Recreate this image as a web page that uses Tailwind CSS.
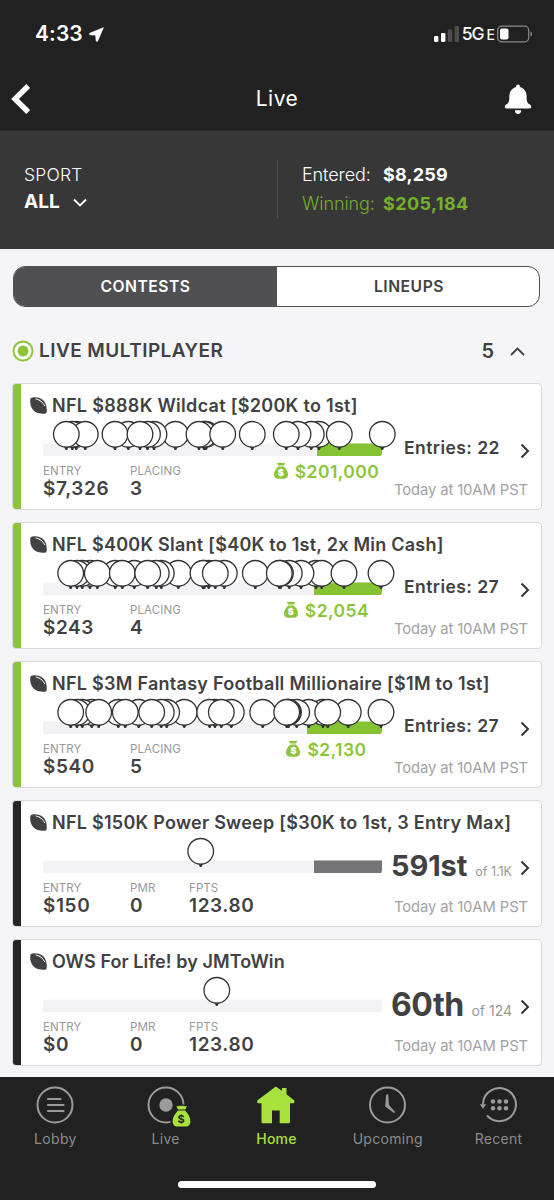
<!DOCTYPE html>
<html lang="en">
<head>
<meta charset="utf-8">
<title>Live</title>
<script src="https://cdn.jsdelivr.net/npm/@tailwindcss/browser@4"></script>
</head>
<body class="w-[554px] h-[1200px] overflow-hidden bg-[#f5f5f8] font-['Inter',sans-serif] text-[#414143] flex flex-col">
<svg class="hidden">
  <defs>
    <symbol id="ball" viewBox="0 0 18 18"><path d="M.3 2.800C.5 1.200 1.200.5 2.800.4C7-.1 11.500.9 14.300 3.800C17.300 7 18 11.500 17.700 15.500C17.500 17 17 17.500 15.500 17.700C11.200 18 6.600 17.200 3.600 14C.6 11 0 6.800.3 2.800Z" fill="#414143"/><path d="M6 2C10 2.700 14.200 5.600 15.700 9.600" fill="none" stroke="#fff" stroke-width="1"/><path d="M9.600 4.200l.7-1.500M11.600 5.500l1-1.300" stroke="#fff" stroke-width=".8"/></symbol>
    <symbol id="bag" viewBox="0 0 14 17"><path d="M2.800.6C4 1.600 5 .4 7 .7C9 .4 10 1.600 11.400.6L10 3.500H4.200Z"/><path d="M4.300 4.600H9.800C12.200 6.800 14 9.500 14 12.500C14 15.500 12.200 16.700 9.500 16.700H4.500C1.800 16.700 0 15.500 0 12.500C0 9.500 1.900 6.800 4.300 4.600Z"/></symbol>
    <g id="pin"><path d="M-2.400 12L-.8 15.800H.8L2.400 12Z" fill="#333335"/><circle r="12.800" fill="#fff" stroke="#333335" stroke-width="1.300"/></g>
    <symbol id="chev" viewBox="0 0 10 16"><path d="M1.500 1.500L8 8L1.500 14.500" fill="none" stroke="#333" stroke-width="2"/></symbol>
  </defs>
</svg>

<header class="h-[131px] shrink-0 bg-[#212121] text-white border-b border-[#2b2b2b]">
  <div class="h-[68px] pl-[35px] pr-[21px] flex items-center justify-between">
    <div class="flex items-center gap-[6px]">
      <span class="text-[21px] font-semibold tracking-[0.1px]">4:33</span>
      <svg class="w-[15px] h-[15px]" viewBox="0 0 15 15"><path d="M14.600.4L8.800 14C8.400 14.800 7.200 14.800 7 13.800L6.500 8.300L1 7.900C0 7.700-.1 6.600.9 6.100Z" fill="#fff" stroke="#fff" stroke-width=".4"/></svg>
    </div>
    <div class="flex items-center gap-[3px]">
      <svg class="w-[26px] h-[16px]" viewBox="0 0 26 16"><rect x="1" y="10" width="4.400" height="6" rx="1.200" fill="#fff"/><rect x="8" y="7" width="4.400" height="9" rx="1.200" fill="#fff"/><rect x="14.800" y="3.500" width="4.400" height="12.500" rx="1.200" fill="#4d4d4d"/><rect x="21.600" y="0" width="4.400" height="16" rx="1.200" fill="#4d4d4d"/></svg>
      <span class="text-[17.500px] font-medium tracking-[-1px] pt-px">5G<span class="text-[14px] ml-[3px]">E</span></span>
      <svg class="w-[36px] h-[18px]" viewBox="0 0 36 18"><rect x=".7" y="1.200" width="31" height="15.600" rx="4" fill="none" stroke="#8a8a8a" stroke-width="1.200"/><rect x="3" y="3.500" width="8.500" height="11" rx="2" fill="#fff"/><path d="M33.500 6.500C35.600 7.500 35.600 10.500 33.500 11.500Z" fill="#8a8a8a"/></svg>
    </div>
  </div>
  <div class="h-[62px] pl-[11px] pr-[22px] grid grid-cols-3 items-center">
    <svg class="w-[20px] h-[30px]" viewBox="0 0 20 30"><path d="M17.200 2L4 15L17.200 28" fill="none" stroke="#fff" stroke-width="5.400"/></svg>
    <span class="text-[21px] text-center pl-[11px] tracking-[0.5px]">Live</span>
    <svg class="w-[28px] h-[31px] justify-self-end" viewBox="0 0 28 31"><path d="M14 .5C15.500.5 15.900 1.500 15.900 3C20 4.200 22.600 7.500 22.600 12C22.600 18 23.500 19.200 25.800 20.600C28 22 27.500 24.500 25.500 24.500H2.500C.5 24.500 0 22 2.200 20.600C4.500 19.200 5.400 18 5.400 12C5.400 7.500 8 4.200 12.100 3C12.100 1.500 12.500.5 14 .5Z" fill="#fff"/><path d="M10.800 26.300H17.200C17.200 31.300 10.800 31.300 10.800 26.300Z" fill="#fff"/></svg>
  </div>
</header>

<section class="h-[118px] shrink-0 bg-[#373737] text-white flex">
  <div class="w-[277px] pl-[24px] pt-[31px]">
    <div class="h-[26px] flex items-center text-[17.500px] font-light tracking-[0.2px]">SPORT</div>
    <div class="h-[28px] flex items-center gap-[13px] text-[19px] font-bold">ALL
      <svg class="w-[14px] h-[9px]" viewBox="0 0 14 9"><path d="M1 1.500L7 7.500L13 1.500" fill="none" stroke="#fff" stroke-width="1.800"/></svg>
    </div>
  </div>
  <div class="w-px h-[58px] mt-[29px] bg-[#505050]"></div>
  <div class="pl-[24px] pt-[29px] text-[18px]">
    <div class="h-[29px] flex items-center"><span class="w-[81px] font-light tracking-[-0.1px]">Entered:</span><span class="font-bold tracking-[0.2px]">$8,259</span></div>
    <div class="h-[29px] flex items-center text-[#76ae2d]"><span class="w-[81px] font-light tracking-[-0.1px]">Winning:</span><span class="font-bold tracking-[0.4px]">$205,184</span></div>
  </div>
</section>

<main class="flex-1 pl-[12px] pr-[12px] pt-[17px]">
  <div class="ml-px h-[41px] w-[527px] rounded-[12px] border border-[#505052] bg-white overflow-hidden flex text-[15.700px] font-semibold tracking-[0.5px]">
    <div class="w-[263px] bg-[#505052] text-white flex items-center justify-center pt-px">CONTESTS</div>
    <div class="flex-1 flex items-center justify-center pt-px pl-[2px]">LINEUPS</div>
  </div>
  <div class="h-[76px] pt-[12px] flex items-center">
    <svg class="w-[22px] h-[22px]" viewBox="0 0 22 22"><circle cx="11" cy="11" r="9.500" fill="#fff" stroke="#8bc53a" stroke-width="1.900"/><circle cx="11" cy="11" r="5.500" fill="#8bc53a"/></svg>
    <span class="ml-[5px] pt-px text-[19px] font-semibold tracking-[0.450px]">LIVE MULTIPLAYER</span>
    <span class="ml-auto text-[20px] font-semibold">5</span>
    <svg class="w-[15px] h-[9px] ml-[16px] mr-[17px] mt-px" viewBox="0 0 15 9"><path d="M1 8L7.500 1.500L14 8" fill="none" stroke="#414143" stroke-width="1.800"/></svg>
  </div>

  <div id="contests" class="flex flex-col gap-[12px]"></div>
</main>

<nav class="h-[123px] shrink-0 bg-[#212121] text-[#8c8c8c] text-[14px] tracking-[0.3px] flex flex-col items-center">
  <div class="w-full h-[104px] pt-[9px] grid grid-cols-5">
    <div class="flex flex-col items-center"><svg class="w-[48px] h-[42px]" viewBox="0 0 48 42"><circle cx="24" cy="19" r="17.500" fill="none" stroke="#9b9b9b" stroke-width="2"/><path d="M17 13H29.500M17 19H32.500M17 25H32.500" stroke="#9b9b9b" stroke-width="2.200" stroke-linecap="round"/></svg><span class="leading-[22px]">Lobby</span></div>
    <div class="flex flex-col items-center pr-[1px]"><span class="relative w-[48px] h-[42px]"><svg class="w-[48px] h-[42px]" viewBox="0 0 48 42"><circle cx="24" cy="19" r="17.500" fill="none" stroke="#9b9b9b" stroke-width="2"/><path d="M28.500 18.500H48V42H28.500Z" fill="#212121"/><circle cx="24" cy="19" r="6.700" fill="#9b9b9b"/></svg><svg class="absolute left-[30px] top-[19px] w-[19px] h-[22px] fill-[#a9e23c]" viewBox="-.5 0 15 17" preserveAspectRatio="none"><path d="M2.800.6C4 1.600 5 .4 7 .7C9 .4 10 1.600 11.400.6L10 3.500H4.200Z"/><path d="M4.300 4.200H9.800C12.200 6.500 14 9.500 14 12.500C14 15.500 12.200 16.700 9.500 16.700H4.500C1.800 16.700 0 15.500 0 12.500C0 9.500 1.900 6.500 4.300 4.200Z"/></svg><b class="absolute left-[30px] top-[26px] w-[19px] text-center text-[11px] leading-[14px] tracking-normal text-[#212121]">$</b></span><span class="leading-[22px]">Live</span></div>
    <div class="flex flex-col items-center pr-[1px] text-[#a9e23c]"><svg class="w-[48px] h-[42px]" viewBox="0 0 48 42"><path d="M23.800.5L30 4.800V2H34.500V8.200L42.300 14.500Q43 17 41.500 17.300H38V36Q38 37.300 36.500 37.300H27.700V24.500H20V37.300H11Q9.500 37.300 9.500 36V17.300H6Q4.600 17 5.300 14.500Z" fill="#a9e23c"/></svg><span class="leading-[22px] font-medium tracking-[0.2px]">Home</span></div>
    <div class="flex flex-col items-center"><svg class="w-[48px] h-[42px]" viewBox="0 0 48 42"><circle cx="23.500" cy="19" r="17.500" fill="none" stroke="#9b9b9b" stroke-width="2"/><path d="M22.200 8.500H24.200L25 19L31 26L30 27L21.200 20.500Z" fill="#9b9b9b"/></svg><span class="leading-[22px]">Upcoming</span></div>
    <div class="flex flex-col items-center"><svg class="w-[48px] h-[42px]" viewBox="0 0 48 42"><path d="M8 17.500A16.500 16.500 0 1 1 12.500 30" fill="none" stroke="#9b9b9b" stroke-width="2" stroke-linecap="round"/><path d="M4.800 18.300H11.200L8 22.800Z" fill="#9b9b9b"/><g fill="#9b9b9b"><circle cx="18" cy="15.500" r="2.200"/><circle cx="24.500" cy="15.500" r="2.200"/><circle cx="31" cy="15.500" r="2.200"/><circle cx="18" cy="22.200" r="2.200"/><circle cx="24.500" cy="22.200" r="2.200"/><circle cx="31" cy="22.200" r="2.200"/></g></svg><span class="leading-[22px]">Recent</span></div>
  </div>
  <div class="w-[198px] h-[7px] rounded-full bg-white"></div>
</nav>

<script>
  // Pins are listed back to front.
  const contests = [
    { title: 'NFL $888K Wildcat [$200K to 1st]', track: 'tracking-[0.3px]', zone: 317, entry: '$7,326', placing: 3, won: '$201,000', entries: 22,
      pins: [76.3, 72.3, 85.3, 66.3, 128.3, 115, 175.5, 154, 147.5, 140, 206, 204, 199, 222.7, 252.3, 319, 311.3, 298, 286.3, 339.3, 382.3] },
    { title: 'NFL $400K Slant [$40K to 1st, 2x Min Cash]', track: 'tracking-[0.25px]', zone: 314, entry: '$243', placing: 4, won: '$2,054', entries: 27,
      pins: [90, 82.3, 77, 70.7, 115.3, 97.3, 134.3, 122.3, 178.3, 161.3, 156.3, 147.7, 208.7, 204.3, 203, 224.3, 215.3, 255.3, 316, 321.7, 301, 289.3, 280.5, 279.3, 344, 381] },
    { title: 'NFL $3M Fantasy Football Millionaire [$1M to 1st]', track: 'tracking-[0.27px]', zone: 307, entry: '$540', placing: 5, won: '$2,130', entries: 27,
      pins: [91.7, 82.3, 77, 70.7, 118.3, 98.7, 138.7, 125.3, 184.3, 166.7, 161.3, 151.7, 215, 209.7, 231.3, 221.3, 262.7, 323, 308.7, 296.7, 288.5, 287.7, 286.7, 348.3, 327.7, 381] },
    { title: 'NFL $150K Power Sweep [$30K to 1st, 3 Entry Max]', track: 'tracking-[0.26px]', zone: 314, entry: '$150', pmr: 0, fpts: '123.80', pins: [200.7],
      rank: '591st', rankClass: 'pt-[1px] text-[29px] tracking-[-0.1px]', of: 'of 1.1K', ofClass: 'text-[12.5px]' },
    { title: 'OWS For Life! by JMToWin', track: 'tracking-[0.08px]', entry: '$0', pmr: 0, fpts: '123.80', pins: [216.8],
      rank: '60th', rankClass: 'text-[32px] tracking-[-0.5px]', of: 'of 124', ofClass: 'text-[14px]' },
  ];
  const stat = (label, value, width) => `<div class="${width}"><div class="h-[16px] leading-[16px] text-[11.5px] text-[#98989b] tracking-[0.1px]">${label}</div><div class="h-[20px] leading-[20px] text-[19px] font-semibold tracking-[0.6px]">${value}</div></div>`;
  const card = c => `
    <article class="h-[127px] w-[530px] rounded-[4px] border border-[#d9d9dd] bg-white overflow-hidden flex">
      <div class="w-[8px] ${c.won ? 'bg-[#8bc53a]' : 'bg-[#262626]'}"></div>
      <div class="flex-1">
        <div class="h-[36px] pt-[7px] pl-[9px] flex items-center gap-[5px]"><svg class="w-[17px] h-[17px]"><use href="#ball"/></svg><span class="text-[18px] font-semibold whitespace-nowrap ${c.track}">${c.title}</span></div>
        <div class="flex">
          <div class="w-[370px]">
            <svg class="w-[370px] h-[40px] overflow-visible block" viewBox="21 0 370 40"><rect x="43" y="23.5" width="339" height="12.5" fill="#f3f3f5"/>
              ${c.zone ? `<path d="M${c.zone} 23.5H382V33L381 36H${c.zone}Z" fill="${c.won ? '#86c332' : '#757577'}"/>` : ''}
              <g transform="translate(0 14.3)">${c.pins.map(x => `<use href="#pin" x="${x}"/>`).join('')}</g></svg>
            <div class="flex pl-[22px] pt-[3px]">
              ${stat('ENTRY', c.entry, 'w-[87px]')}
              ${c.won ? stat('PLACING', c.placing, 'w-[59px]') + `<div class="h-[18px] flex-1 flex items-center justify-center gap-[7px] text-[17.5px] font-semibold text-[#8bc53a] pl-[73px] tracking-[0.45px]"><span class="relative w-[14px] h-[17px] mb-[4px] shrink-0"><svg class="w-[14px] h-[17px] fill-[#8bc53a]"><use href="#bag"/></svg><b class="absolute left-0 top-[5px] w-[14px] text-center text-[9px] leading-[11px] tracking-normal text-white">$</b></span>${c.won}</div>`
                      : stat('PMR', c.pmr, 'w-[59px]') + stat('FPTS', c.fpts, 'w-auto')}
            </div>
          </div>
          <div class="w-[150px]">
            <div class="h-[57px] flex items-center">${c.won
              ? `<span class="ml-[13px] w-[116px] text-[17.5px] font-semibold tracking-[0.45px] whitespace-nowrap">Entries: ${c.entries}</span>`
              : `<div class="w-[129px] flex items-baseline justify-between pr-[8px] whitespace-nowrap"><span class="font-bold ${c.rankClass}">${c.rank}</span><span class="text-[#98989b] ${c.ofClass}">${c.of}</span></div>`}<svg class="w-[10px] h-[16px] mt-[5px]"><use href="#chev"/></svg></div>
            <div class="h-[26px] pr-[13px] flex items-center justify-end text-[14.8px] tracking-[-0.1px] text-[#a2a2a5] whitespace-nowrap">Today at 10AM PST</div>
          </div>
        </div>
      </div>
    </article>`;
  document.getElementById('contests').innerHTML = contests.map(card).join('');
</script>
</body>
</html>
